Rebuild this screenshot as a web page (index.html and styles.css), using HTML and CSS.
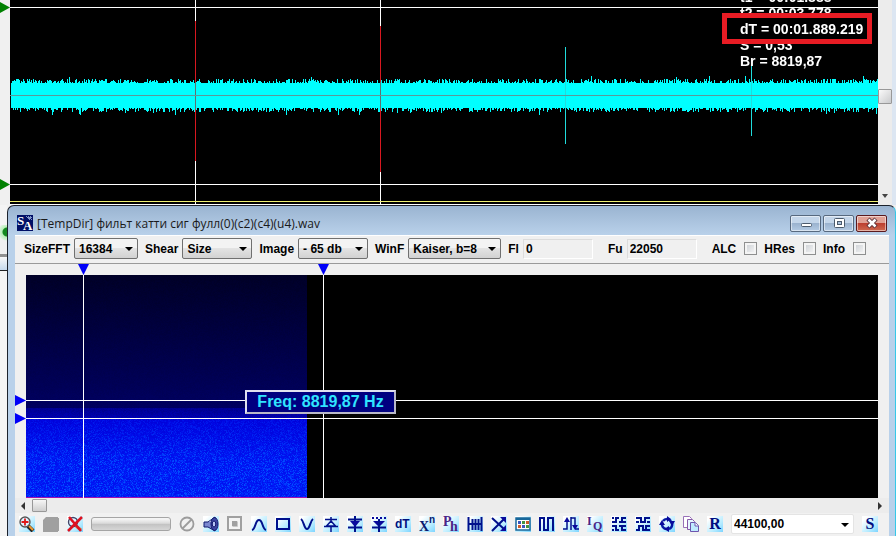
FILE: index.html
```html
<!DOCTYPE html>
<html lang="ru">
<head>
    <meta charset="UTF-8">
    <meta name="viewport" content="width=device-width, initial-scale=1.0">
    <title>Signal Analyzer</title>
    <link rel="stylesheet" href="styles.css">
</head>
<body>

    <!-- Waveform -->
    <section class="wave">
        <div class="wave-gutter">
            <span class="marker marker-green marker-top"></span>
            <span class="marker marker-green marker-bottom"></span>
        </div>
        <div class="wave-view">
            <canvas id="wave" class="plot"></canvas>
            <div class="readout">
                <p>t1 = 00:01.888</p>
                <p>t2 = 00:03.778</p>
                <p>dT = 00:01.889.219</p>
                <p>S = 0,53</p>
                <p>Br = 8819,87</p>
            </div>
            <div class="highlight"></div>
        </div>
        <div class="vscroll">
            <span class="vscroll-thumb"></span>
            <span class="arrow-down"></span>
        </div>
    </section>

    <main class="desk">
        <!-- Edge of the window behind -->
        <aside class="behind">
            <div class="behind-title"></div>
            <div class="behind-tool"></div>
            <div class="behind-bar"></div>
        </aside>

        <!-- Spectrum window -->
        <section class="window">
            <header class="titlebar">
                <svg class="logo" viewBox="0 0 16 16" aria-hidden="true">
                    <rect width="16" height="16" fill="#000f66"/>
                    <path d="M9 1h1v1h1v-1h1v1h1v-1h1v1h1v1h-1v1h1v1h-1v-1h-1v1h-1v-1h-1v-1h-1v-1h-1z" fill="#7f93c8"/>
                    <text x="0" y="10" class="logo-text">S</text>
                    <text x="6" y="15" class="logo-text">A</text>
                </svg>
                <h1>[TempDir] фильт катти сиг фулл(0)(c2)(c4)(u4).wav</h1>
                <div class="window-buttons">
                    <button type="button" aria-label="Minimize">
                        <svg viewBox="0 0 14 12"><rect x="2.500" y="6.500" width="10" height="3" rx="1" fill="#fff" stroke="#4b5a6c"/></svg>
                    </button>
                    <button type="button" aria-label="Maximize">
                        <svg viewBox="0 0 14 12"><rect x="2.500" y="1.500" width="10" height="9" rx="1" fill="#fff" stroke="#4b5a6c"/><rect x="5.500" y="4.500" width="4" height="3" fill="#a9c1dc" stroke="#4b5a6c"/></svg>
                    </button>
                    <button type="button" class="close" aria-label="Close">
                        <svg viewBox="0 0 14 12"><path d="M3 2l8 8M11 2l-8 8" stroke="#5b3036" stroke-width="4.500"/><path d="M3.500 2.500l7 7M10.500 2.500l-7 7" stroke="#fff" stroke-width="2.500"/></svg>
                    </button>
                </div>
            </header>

            <div class="client">
                <form class="settings">
                    <div class="field">
                        <label for="size">SizeFFT</label>
                        <span class="combo combo-size"><select id="size"><option>16384</option></select></span>
                    </div>
                    <div class="field">
                        <label for="shear">Shear</label>
                        <span class="combo combo-shear"><select id="shear"><option>Size</option></select></span>
                    </div>
                    <div class="field">
                        <label for="image">Image</label>
                        <span class="combo combo-shear"><select id="image"><option>- 65 db</option></select></span>
                    </div>
                    <div class="field">
                        <label for="winf">WinF</label>
                        <span class="combo combo-winf"><select id="winf"><option>Kaiser, b=8</option></select></span>
                    </div>
                    <div class="field">
                        <label for="fl">Fl</label>
                        <input type="text" id="fl" value="0">
                    </div>
                    <div class="field field-wide">
                        <label for="fu">Fu</label>
                        <input type="text" id="fu" value="22050">
                    </div>
                    <div class="field field-wide check">
                        <label for="alc">ALC</label>
                        <input type="checkbox" id="alc">
                    </div>
                    <div class="field check">
                        <label for="hres">HRes</label>
                        <input type="checkbox" id="hres">
                    </div>
                    <div class="field check">
                        <label for="info">Info</label>
                        <input type="checkbox" id="info">
                    </div>
                </form>

                <!-- Spectrogram -->
                <div class="spectrum">
                    <div class="spectrum-view">
                        <canvas id="spectrum" class="plot"></canvas>
                        <span class="marker marker-time marker-t1"></span>
                        <span class="marker marker-time marker-t2"></span>
                        <span class="marker marker-freq marker-f1"></span>
                        <span class="marker marker-freq marker-f2"></span>
                        <div class="freq">Freq: 8819,87 Hz</div>
                    </div>
                </div>

                <div class="hscroll">
                    <span class="arrow-left"></span>
                    <span class="hscroll-thumb"></span>
                    <span class="arrow-right"></span>
                </div>

                <!-- Tools -->
                <div class="tools">
                    <button type="button" aria-label="Zoom in"><svg viewBox="0 0 16 16"><path d="M9 10l5 5" stroke="#222" stroke-width="4"/><path d="M10 10l4 4" stroke="#f09a30" stroke-width="2"/><circle cx="6" cy="6" r="5" fill="#dff3ff" stroke="#555" stroke-width="1.400"/><path d="M6 2.500v7M2.500 6h7" stroke="#e01818" stroke-width="1.800"/></svg></button>
                    <button type="button" class="plain" aria-label="Save"><svg viewBox="0 0 16 16"><path d="M0 4l3-3h12v1h1v13h-1v1H0z" fill="#a0a0a0"/></svg></button>
                    <button type="button" aria-label="Zoom off"><svg viewBox="0 0 16 16"><path d="M9 10l5 4" stroke="#d98a48" stroke-width="3"/><circle cx="6" cy="6" r="4.500" fill="#dff3ff" stroke="#446" stroke-width="1.400"/><path d="M2 1l12 14M15 1L1 15" stroke="#dd1220" stroke-width="2.600"/></svg></button>
                    <span class="progress"></span>
                    <button type="button" class="plain" aria-label="Stop"><svg viewBox="0 0 16 16"><circle cx="8" cy="8" r="6.500" fill="none" stroke="#9c9c9c" stroke-width="1.800"/><path d="M3.500 12.500l9-9" stroke="#9c9c9c" stroke-width="1.800"/></svg></button>
                    <button type="button" aria-label="Play sound"><svg viewBox="0 0 16 16"><path d="M1 6h4l7-5v14l-7-4H1z" fill="#7c88d0" stroke="#10186c"/><path d="M6 6l5-4v4z" fill="#dbe4ff"/><ellipse cx="11.500" cy="8" rx="3.500" ry="6.500" fill="#3d47a4" stroke="#10186c"/><ellipse cx="11" cy="8" rx="1.800" ry="3" fill="#b5c4f5" stroke="#10186c"/></svg></button>
                    <button type="button" class="plain" aria-label="Frame"><svg viewBox="0 0 16 16"><rect x="1" y="1" width="13" height="13" fill="#f4f4f4" stroke="#a0a0a0" stroke-width="2"/><rect x="5" y="5" width="5" height="5" fill="#a0a0a0"/><path d="M5.500 10.500h5v-5" fill="none" stroke="#c8c8c8"/></svg></button>
                    <button type="button" aria-label="Low pass"><svg viewBox="0 0 16 16"><path d="M1 14C5 13 4 4 8 4s3 9 7 10" class="line"/></svg></button>
                    <button type="button" aria-label="Band"><svg viewBox="0 0 16 16"><path d="M2 3h12v10H2z" class="line"/></svg></button>
                    <button type="button" aria-label="High pass"><svg viewBox="0 0 16 16"><path d="M2 3c3 2 3 10 6 10s3-8 6-10" class="line"/></svg></button>
                    <button type="button" aria-label="Detector"><svg viewBox="0 0 16 16"><path d="M2 3.500h12M8 1v4M8 5l4.500 5h-9zM1 10.500h14M8 11v5" class="thin"/></svg></button>
                    <button type="button" aria-label="Half wave"><svg viewBox="0 0 16 16"><path d="M1 3.500h14M1 11.500h14M8 0v16" class="line"/><path d="M3 5h10l-5 6z" class="fill"/></svg></button>
                    <button type="button" aria-label="Full wave"><svg viewBox="0 0 16 16"><path d="M1 1h2v2H1zM5 1h2v2H5zM9 1h2v2H9zM13 1h2v2h-2zM2 5h12l-6 6z" class="fill"/><path d="M1 11.500h14M8 3v13" class="line"/></svg></button>
                    <button type="button" aria-label="Delta T"><svg viewBox="0 0 16 16"><text x="0" y="12" class="dt">dT</text></svg></button>
                    <button type="button" aria-label="Power"><svg viewBox="0 0 16 16"><text x="0" y="15" class="serif">X</text><text x="10" y="7" class="sup">n</text></svg></button>
                    <button type="button" aria-label="Phase"><svg viewBox="0 0 16 16"><text x="0" y="10" class="serif purple">P</text><text x="7" y="15" class="serif purple">h</text></svg></button>
                    <button type="button" aria-label="Comb"><svg viewBox="0 0 16 16"><path d="M1.500 1v14M5.500 3v11M8.500 3v11M11.500 3v11M14.500 1v14M1 8h14" class="line"/></svg></button>
                    <button type="button" aria-label="Mix"><svg viewBox="0 0 16 16"><path d="M1 2l12 11M1 15L13 3" class="line"/><path d="M9 1h6v6zM15 9v6H9z" class="fill"/></svg></button>
                    <button type="button" aria-label="Table"><svg viewBox="0 0 16 16"><rect x="1" y="2" width="14" height="12" fill="#fff" stroke="#17679a" stroke-width="1.500"/><path d="M1 3h14" stroke="#17679a" stroke-width="2"/><path d="M3 5h3v3H3zM7 9h3v3H7z" fill="#3a57bd"/><path d="M7 5h3v3H7zM11 9h3v3h-3z" fill="#44953f"/><path d="M11 5h3v3h-3zM3 9h3v3H3z" fill="#cc5a29"/></svg></button>
                    <button type="button" aria-label="Square wave"><svg viewBox="0 0 16 16"><path d="M1 15V2h4v12h4V2h5v13" class="line"/></svg></button>
                    <button type="button" aria-label="Swap"><svg viewBox="0 0 16 16"><path d="M0 13h4V4M8 1v13M8 2h4v9M12 13h4" class="thin"/><path d="M1 6l3-5 3 5zM9 9l3 5 3-5z" class="fill"/></svg></button>
                    <button type="button" aria-label="Quadrature"><svg viewBox="0 0 16 16"><text x="0" y="9" class="small purple">I</text><text x="6" y="14" class="small purple">Q</text></svg></button>
                    <button type="button" aria-label="Invert"><svg viewBox="0 0 16 16"><path d="M1 6h4V2h3M8 6h3V2h4M1 2h2M11 6h4M1 10h4v4h3M8 10h3v4h4M1 14h2M12 10h3" class="line"/></svg></button>
                    <button type="button" aria-label="Compare"><svg viewBox="0 0 16 16"><path d="M1 2h5v4h4V2h5M1 6h3M12 6h3M1 14h3v-4h4v4h3v-4h4M12 14h3" class="line"/></svg></button>
                    <button type="button" aria-label="Cycle"><svg viewBox="0 0 16 16"><path d="M4 5a5 5 0 0 1 8 0M13 7a5 5 0 0 1-3 6M7 13a5 5 0 0 1-4-6" fill="none" stroke="#071ca5" stroke-width="2.600"/><path d="M8 0l4 3-4 3zM10 5h6l-3 5zM10 16l-5-3 5-3zM0 9l3-5 3 5z" class="fill"/></svg></button>
                    <button type="button" class="plain" aria-label="Copy"><svg viewBox="0 0 16 16"><path d="M.500.500h6l2 2v9h-8z" fill="#fff" stroke="#9870b8"/><path d="M4.500 3.500h5l2 2v8h-7z" fill="#e6f5ff" stroke="#8858a8"/><path d="M7.500 6.500h5l3 3v6h-8z" fill="#bfeaff" stroke="#6d55ae"/><path d="M12 6.500v3.500h3.500" fill="#fff" stroke="#6d55ae"/></svg></button>
                    <button type="button" class="letter">R</button>
                    <span class="combo combo-rate"><select aria-label="Sample rate"><option>44100,00</option></select></span>
                    <button type="button" class="letter">S</button>
                </div>
            </div>
        </section>
    </main>

    <script src="plots.js"></script>
</body>
</html>
```
FILE: styles.css
```css
* {
    box-sizing: border-box;
}

body {
    margin: 0;
    height: 100vh;
    display: flex;
    flex-direction: column;
    overflow: hidden;
    background-color: #f0f0f0;
    color: #000;
    font-family: "Liberation Sans", Arial, sans-serif;
    font-size: 12px;
}

.plot {
    display: block;
    width: 100%;
    height: 100%;
}

/* Waveform */
.wave {
    flex: none;
    height: 205px;
    display: flex;
    border-right: 4px solid #dce6f2;
}

.wave-gutter {
    position: relative;
    width: 10px;
}

.wave-view {
    position: relative;
    flex: 1;
    min-width: 0;
    background-color: #000;
    overflow: hidden;
}

.readout {
    position: absolute;
    top: -11px;
    right: 0;
    width: 138px;
    color: #fff;
    font-size: 14px;
    font-weight: bold;
    line-height: 16px;
    white-space: nowrap;
}

.readout p {
    margin: 0;
}

.highlight {
    position: absolute;
    top: 13px;
    right: 6px;
    width: 150px;
    height: 31px;
    border: 5px solid #e81c24;
}

/* Scrollbars */
.vscroll {
    width: 14px;
    display: flex;
    flex-direction: column;
    justify-content: space-between;
    align-items: center;
    padding: 89px 0 7px;
    background-color: #ececec;
}

.vscroll-thumb,
.hscroll-thumb {
    width: 14px;
    height: 15px;
    border: 1px solid #989898;
    border-radius: 1px;
    background: linear-gradient(135deg, #fafafa, #c9cacc);
}

.arrow-down {
    border: 3px solid transparent;
    border-top: 4px solid #444;
    border-bottom: 0;
}

.hscroll {
    height: 15px;
    display: flex;
    align-items: center;
    gap: 7px;
    padding: 0 7px 0 6px;
    background-color: #ececec;
}

.hscroll-thumb {
    height: 13px;
    width: 15px;
    background: linear-gradient(#f6f6f6, #cfcfcf);
}

.arrow-left {
    border: 4px solid transparent;
    border-right: 4px solid #333;
    border-left: 0;
}

.arrow-right {
    margin-left: auto;
    border: 4px solid transparent;
    border-left: 4px solid #333;
    border-right: 0;
}

/* Cursor markers */
.marker {
    position: absolute;
    background-color: #0000f8;
}

.marker-green {
    left: 0;
    width: 10px;
    height: 11px;
    background-color: #008000;
    clip-path: polygon(0 0, 100% 50%, 0 100%);
}

.marker-top {
    top: 2px;
}

.marker-bottom {
    top: 179px;
}

.marker-time {
    top: -11px;
    width: 11px;
    height: 11px;
    clip-path: polygon(0 0, 100% 0, 50% 100%);
}

.marker-t1 {
    left: 52px;
}

.marker-t2 {
    left: 292px;
}

.marker-freq {
    left: -11px;
    width: 11px;
    height: 11px;
    clip-path: polygon(0 0, 100% 50%, 0 100%);
}

.marker-f1 {
    top: 120px;
}

.marker-f2 {
    top: 138px;
}

/* Lower part */
.desk {
    flex: 1;
    min-height: 0;
    display: flex;
}

.behind {
    width: 7px;
    background-color: #f4f4f4;
}

.behind-title {
    height: 20px;
}

.behind-tool {
    height: 29px;
    background: radial-gradient(circle at 7px 7px, #148a20 4px, #b8f0b8 5px, #d8f4d8 8px, #f0f0f0 9px);
}

.behind-bar {
    height: 17px;
    border-top: 3px solid #919191;
    border-bottom: 1px solid #222;
    background: linear-gradient(#f8f8f8, #c5d9ed);
}

/* Window */
.window {
    flex: 1;
    min-width: 0;
    display: flex;
    flex-direction: column;
    padding: 0 6px 0 7px;
    border: 1px solid #1c222c;
    border-right-color: #35c8e8;
    border-bottom: 0;
    border-radius: 7px 7px 0 0;
    background: linear-gradient(#9ab4d1, #b9d1ea 29px);
}

.titlebar {
    flex: none;
    height: 29px;
    display: flex;
    align-items: center;
    gap: 4px;
    padding: 5px 2px 0;
}

.titlebar h1 {
    flex: 1;
    margin: 0;
    color: #1a1a1a;
    font-family: "Open Sans", "Noto Sans", sans-serif;
    font-size: 12px;
    font-weight: normal;
    white-space: nowrap;
}

.logo {
    width: 16px;
    height: 16px;
}

.logo-text {
    fill: #fff;
    font: bold 13px "Liberation Serif", serif;
}

.window-buttons {
    display: flex;
    gap: 2px;
}

.window-buttons button {
    width: 31px;
    height: 17px;
    padding: 0;
    display: flex;
    justify-content: center;
    align-items: center;
    border: 1px solid #57697f;
    border-radius: 2px;
    background: linear-gradient(#c4d6ea 45%, #9bb3cf 50%, #b4cbe4);
    box-shadow: inset 0 0 0 1px rgba(255, 255, 255, 0.5);
}

.window-buttons .close {
    border-color: #5a1a1e;
    background: linear-gradient(#e0a195 45%, #bd4030 50%, #cf6a50);
}

.window-buttons svg {
    width: 14px;
    height: 12px;
}

.client {
    flex: 1;
    min-height: 0;
    display: flex;
    flex-direction: column;
    background-color: #f0f0f0;
}

/* Settings row */
.settings {
    flex: none;
    height: 29px;
    display: flex;
    align-items: center;
    gap: 7px;
    padding: 0 0 2px 9px;
    border-top: 1px solid #fff;
    border-bottom: 1px solid #9a9a9a;
    font-weight: bold;
}

.field {
    display: flex;
    align-items: center;
    gap: 4px;
    white-space: nowrap;
}

.field-wide {
    margin-left: 8px;
}

.check {
    gap: 8px;
}

.field input[type="text"] {
    width: 70px;
    height: 20px;
    padding: 0 2px;
    border: 1px solid #dcdcdc;
    border-right-color: #fff;
    border-bottom-color: #fff;
    background-color: #f0f0f0;
    font: bold 12px "Liberation Sans", Arial, sans-serif;
}

.field input[type="checkbox"] {
    appearance: none;
    width: 13px;
    height: 13px;
    margin: 0;
    border: 1px solid #8e8f8f;
    background: linear-gradient(135deg, #c9cdd2, #f8f8f8);
    box-shadow: inset 0 0 0 2px #f4f4f4;
}

.combo {
    position: relative;
    height: 21px;
}

.combo::after {
    content: "";
    position: absolute;
    top: 9px;
    right: 5px;
    border: 4px solid transparent;
    border-top-color: #000;
    border-bottom: 0;
    pointer-events: none;
}

.combo select {
    appearance: none;
    display: block;
    width: 100%;
    height: 100%;
    padding: 0 4px;
    border: 1px solid #707070;
    border-radius: 2px;
    background: linear-gradient(#f3f3f3 45%, #e3e3e3 50%, #d2d2d2);
    color: #000;
    font: bold 12px "Liberation Sans", Arial, sans-serif;
}

.combo-size {
    width: 64px;
}

.combo-shear {
    width: 70px;
}

.combo-winf {
    width: 93px;
}

/* Spectrogram */
.spectrum {
    flex: 1;
    min-height: 0;
    padding: 11px 11px 0;
}

.spectrum-view {
    position: relative;
    height: 100%;
    background-color: #000;
}

.freq {
    position: absolute;
    top: 115px;
    left: 219px;
    width: 151px;
    height: 24px;
    border: 2px solid #b8b8c8;
    border-top-color: #e0e0f0;
    border-left-color: #e0e0f0;
    background-color: #000080;
    color: #30e4ff;
    font-size: 16px;
    font-weight: bold;
    line-height: 20px;
    text-align: center;
    white-space: nowrap;
}

/* Bottom tools */
.tools {
    flex: none;
    height: 23px;
    display: flex;
    align-items: center;
    gap: 8px;
    padding: 0 11px 1px 4px;
    background-color: #f1f1f1;
}

.tools button {
    flex: none;
    width: 16px;
    height: 16px;
    padding: 0;
    border: 0;
    background: linear-gradient(135deg, #fff 15%, #b8ecff 65%, #7cd4ff);
    color: #000c80;
}

.tools .plain {
    background: none;
}

.tools svg {
    display: block;
    width: 16px;
    height: 16px;
}

.tools .letter {
    font: bold 16px/16px "Liberation Serif", serif;
}

.line {
    fill: none;
    stroke: #00108c;
    stroke-width: 2;
}

.thin {
    fill: none;
    stroke: #00108c;
    stroke-width: 1.5;
}

.fill {
    fill: #0a0a9c;
}

.dt {
    fill: #00107c;
    font: bold 12px "Liberation Sans", Arial, sans-serif;
}

.serif {
    fill: #0a1c70;
    font: bold 14px "Liberation Serif", serif;
}

.small {
    font: bold 12px "Liberation Serif", serif;
}

.sup {
    fill: #0a1c70;
    font: bold 10px "Liberation Sans", Arial, sans-serif;
}

.purple {
    fill: #4a2486;
}

.progress {
    width: 80px;
    height: 14px;
    border: 1px solid #a5a5a5;
    border-radius: 3px;
    background: linear-gradient(#f4f4f4 10%, #dadada 45%, #c2c2c2 50%, #d6d6d6);
}

.combo-rate {
    flex: 1;
    height: 20px;
}

.tools .combo select {
    padding: 0 2px;
    border-color: #e4e4e4;
    background: #fff;
}
```
FILE: plots.js
```js
// Repeatable noise
let seed = 7;
function rand() {
    seed = (seed * 16807) % 2147483647;
    return seed / 2147483647;
}

function prepare(id) {
    const canvas = document.getElementById(id);
    canvas.width = canvas.clientWidth;
    canvas.height = canvas.clientHeight;
    return canvas.getContext('2d');
}

function rect(ctx, color, x, y, w, h) {
    ctx.fillStyle = color;
    ctx.fillRect(x, y, w, h);
}

function drawWave() {
    const ctx = prepare('wave');
    const w = ctx.canvas.width;
    const h = ctx.canvas.height;

    // signal
    for (let x = 1; x < w; x++) {
        const up = 12 + Math.floor(Math.pow(rand(), 2) * 5) + (rand() > 0.97 ? 3 : 0);
        const down = 13 + Math.floor(Math.pow(rand(), 2) * 5) + (rand() > 0.97 ? 3 : 0);
        rect(ctx, '#00ffff', x, 95 - up, 1, up + down);
    }
    rect(ctx, '#20dcdc', 555, 47, 1, 97);
    rect(ctx, '#20dcdc', 741, 66, 1, 70);

    // cursors
    [[185, 21, 161], [370, 26, 172]].forEach(([x, top, bottom]) => {
        rect(ctx, '#ffffff', x, 0, 1, h);
        rect(ctx, '#d81820', x, top, 1, bottom - top);
        rect(ctx, '#607070', x, 82, 1, 27);
    });

    // levels
    rect(ctx, '#5a9a9a', 0, 95, w, 1);
    rect(ctx, '#ffffff', 0, 7, w, 1);
    rect(ctx, '#ffffff', 0, 184, w, 1);
    rect(ctx, '#f0f070', 0, 201, w, 1);
    rect(ctx, '#ffffff', 0, 204, w, 1);
}

function drawSpectrum() {
    const ctx = prepare('spectrum');
    const w = ctx.canvas.width;
    const h = ctx.canvas.height;
    const end = 281;

    const image = ctx.createImageData(end, h);
    for (let y = 0; y < h; y++) {
        for (let x = 0; x < end; x++) {
            const i = (y * end + x) * 4;
            const n = rand();
            let g = 0;
            let b;
            if (y < 133) {
                b = 36 + y * 0.42 + n * 7;
            } else if (y < 144) {
                b = 135 + (y - 133) * 3 + n * 22;
            } else {
                const k = Math.min(1, (y - 144) / 45);
                b = 215 + k * 22 + n * 20;
                g = 2 + k * 16 + n * n * n * 70 * (0.3 + k * 0.7);
            }
            image.data[i + 1] = g;
            image.data[i + 2] = b;
            image.data[i + 3] = 255;
        }
    }
    ctx.putImageData(image, 0, 0);
    rect(ctx, '#a010b0', 0, h - 1, end, 1);

    // cursors
    rect(ctx, '#ffffff', 57, 0, 1, h);
    rect(ctx, '#ffffff', 297, 0, 1, h);
    rect(ctx, '#ffffff', 0, 125, w, 1);
    rect(ctx, '#ffffff', 0, 143, w, 1);
}

function draw() {
    seed = 7;
    drawWave();
    drawSpectrum();
}

window.addEventListener('resize', draw);
draw();
```
